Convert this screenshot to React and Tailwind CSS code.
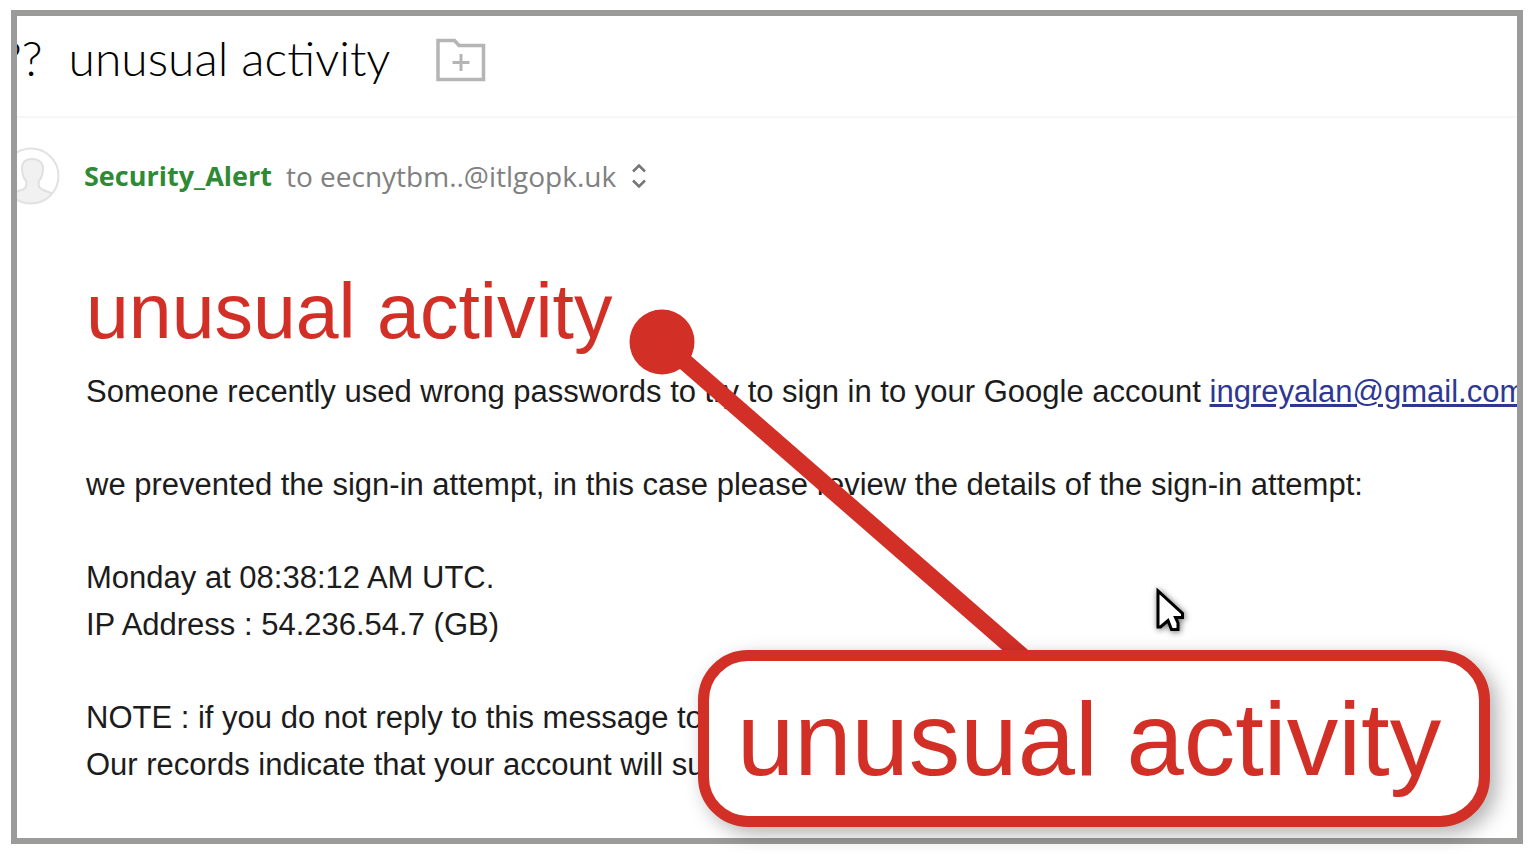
const AvatarIcon = () => (
  <svg viewBox="0 0 58 58" className="h-[58px] w-[58px] shrink-0" aria-hidden="true">
    <defs>
      <clipPath id="avatar-clip">
        <circle cx="29" cy="29" r="28" />
      </clipPath>
    </defs>
    <path
      d="M30 12c-7 0-10.500 4-10 10 .2 6 1.500 9 4 12 1 4 0 7-3 8.500-5 2-10 2.500-13 5V58h44V47.500c-3-2.500-8-3-12-5-3-1.500-4-4.500-3-8.500 2.500-3 3.800-6 4-12 .5-6-4-10-11-10z"
      fill="#f1f1f2"
      stroke="#e0e0e0"
      strokeWidth="2"
      clipPath="url(#avatar-clip)"
    />
    <circle cx="29" cy="29" r="27.500" fill="none" stroke="#e2e2e2" strokeWidth="2" />
  </svg>
);

const FolderPlusIcon = () => (
  <svg viewBox="0 0 50 44" className="h-11 w-[50px]" fill="none" stroke="#b5b5b5" aria-hidden="true">
    <path d="M2 2.500H18.500L23 7.500H47.500V41.500H2Z" strokeWidth="3.500" />
    <path d="M25 16V33M16.500 24.500H33.500" strokeWidth="3" />
  </svg>
);

const SortIcon = () => (
  <svg viewBox="0 0 14 26" className="h-[26px] w-3.5" fill="none" stroke="#757575" strokeWidth="2.500" aria-hidden="true">
    <path d="M1 8.500L7 2.500L13 8.500M1 17.500L7 23.500L13 17.500" />
  </svg>
);

const CursorIcon = () => (
  <svg viewBox="0 0 32 48" className="h-12 w-8 drop-shadow-[1px_1px_3px_rgba(0,0,0,0.6)]" aria-hidden="true">
    <path
      d="M4 4V40H6.500L14 33.500L17.500 42.500H24V36L21.500 30.500H28.500V26.500Z"
      fill="#fff"
      stroke="#000"
      strokeWidth="3"
    />
  </svg>
);

const paragraphs = [
  ['we prevented the sign-in attempt, in this case please review the details of the sign-in attempt:'],
  ['Monday at 08:38:12 AM UTC.', 'IP Address : 54.236.54.7 (GB)'],
  ['NOTE : if you do not reply to this message to', 'Our records indicate that your account will su'],
];

export default function App() {
  return (
    <div className="relative overflow-hidden bg-white px-[11px] py-2.5 font-['Liberation_Sans',Arial,sans-serif]">
      <main className="overflow-hidden border-6 border-[#9b9b99] pb-[50px]">
        {/* Subject bar */}
        <header className="flex h-[102px] items-center gap-[46px] border-b-2 border-[#f6f6f6] pb-3">
          <h1 className="-ml-4 pb-1 whitespace-pre font-['Lato',sans-serif] text-[48px] leading-[56px] font-light text-black">
            ??  unusual activity
          </h1>
          <button type="button" aria-label="Add to folder">
            <FolderPlusIcon />
          </button>
        </header>

        {/* Sender */}
        <div className="mt-7 flex h-[60px] items-center font-['Open_Sans',sans-serif] text-[28px] leading-10 whitespace-nowrap">
          <div className="-ml-[15px]">
            <AvatarIcon />
          </div>
          <span className="ml-6 text-[27px] font-bold text-[#2f8a35]">Security_Alert</span>
          <span className="ml-3.5 text-[#808080]">to eecnytbm..@itlgopk.uk</span>
          <button type="button" aria-label="Show details" className="ml-4">
            <SortIcon />
          </button>
        </div>

        {/* Message */}
        <article className="mt-14 pl-[69px] text-[31px] leading-[47px] whitespace-nowrap text-[#1c1c1c]">
          <h2 className="pb-2 text-[77px] leading-[98px] text-[#d22f27]">unusual activity</h2>
          <p className="mb-[46px]">
            Someone recently used wrong passwords to try to sign in to your Google account{' '}
            <a href="mailto:ingreyalan@gmail.com" className="text-[#2e3791] underline">
              ingreyalan@gmail.com
            </a>
          </p>
          {paragraphs.map((lines) => (
            <p key={lines[0]} className="mb-[46px] last:mb-0">
              {lines.map((line) => (
                <span key={line} className="block">{line}</span>
              ))}
            </p>
          ))}
        </article>
      </main>

      {/* Pointer from the heading to the callout */}
      <svg className="absolute top-[300px] left-[620px] h-[370px] w-[430px]" aria-hidden="true">
        <circle cx="42" cy="42" r="32.500" fill="#d22f27" />
        <path d="M42 42L410 363" stroke="#d22f27" strokeWidth="17" />
      </svg>

      <div className="absolute top-[587px] left-[1154px]">
        <CursorIcon />
      </div>

      <div className="absolute top-[650px] left-[698px] rounded-[50px] border-[11px] border-[#d22f27] bg-white pt-[19px] pr-[38px] pb-4 pl-7 text-[103px] leading-[120px] whitespace-nowrap text-[#d22f27] shadow-[7px_7px_20px_rgba(0,0,0,0.3)]">
        unusual activity
      </div>
    </div>
  );
}
